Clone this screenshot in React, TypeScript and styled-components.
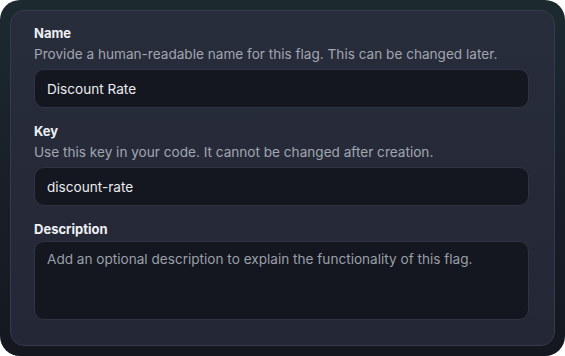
import styled, { createGlobalStyle } from "styled-components";

const GlobalStyle = createGlobalStyle`
  * { box-sizing: border-box; }
  html, body {
    margin: 0;
    background: #ffffff;
    font-family: Inter, "Noto Sans", sans-serif;
  }
`;

const Frame = styled.div`
  width: 565px;
  height: 356px;
  border-radius: 20px;
  background: linear-gradient(180deg, #1c2a30 0%, #19202a 45%, #141720 100%);
  padding: 10px;
  overflow: hidden;
`;

const Card = styled.div`
  height: 336px;
  border: 1px solid #353b4a;
  border-radius: 14px;
  background: linear-gradient(180deg, #272d3b 0%, #262a38 50%, #242735 100%);
  padding: 13px 25px 0 23px;
  display: flex;
  flex-direction: column;
  gap: 14px;
`;

const Field = styled.div`
  display: flex;
  flex-direction: column;
`;

const Label = styled.label`
  font-size: 13px;
  line-height: 18px;
  font-weight: 700;
  color: #eef0f4;
  margin-bottom: 3px;
`;

const Helper = styled.div`
  font-size: 13.6px;
  line-height: 18px;
  color: #a1a6b1;
  margin-bottom: 6px;
`;

const Input = styled.div`
  height: 39px;
  border: 1px solid #2f3442;
  border-radius: 10px;
  background: #151720;
  padding: 0 12px;
  display: flex;
  align-items: center;
  font-size: 13.6px;
  color: #e9ebef;
`;

const TextArea = styled.div`
  height: 79px;
  border: 1px solid #2f3442;
  border-radius: 10px;
  background: #151720;
  padding: 8px 12px;
  font-size: 13.6px;
  line-height: 18px;
  color: #9a9fa9;
`;

type FieldProps = { label: string; helper?: string; value: string };

function TextField({ label, helper, value }: FieldProps) {
  return (
    <Field>
      <Label>{label}</Label>
      {helper && <Helper>{helper}</Helper>}
      <Input>{value}</Input>
    </Field>
  );
}

export default function App() {
  return (
    <>
      <GlobalStyle />
      <Frame>
        <Card>
          <TextField
            label="Name"
            helper="Provide a human-readable name for this flag. This can be changed later."
            value="Discount Rate"
          />
          <TextField
            label="Key"
            helper="Use this key in your code. It cannot be changed after creation."
            value="discount-rate"
          />
          <Field>
            <Label>Description</Label>
            <TextArea>
              Add an optional description to explain the functionality of this flag.
            </TextArea>
          </Field>
        </Card>
      </Frame>
    </>
  );
}
